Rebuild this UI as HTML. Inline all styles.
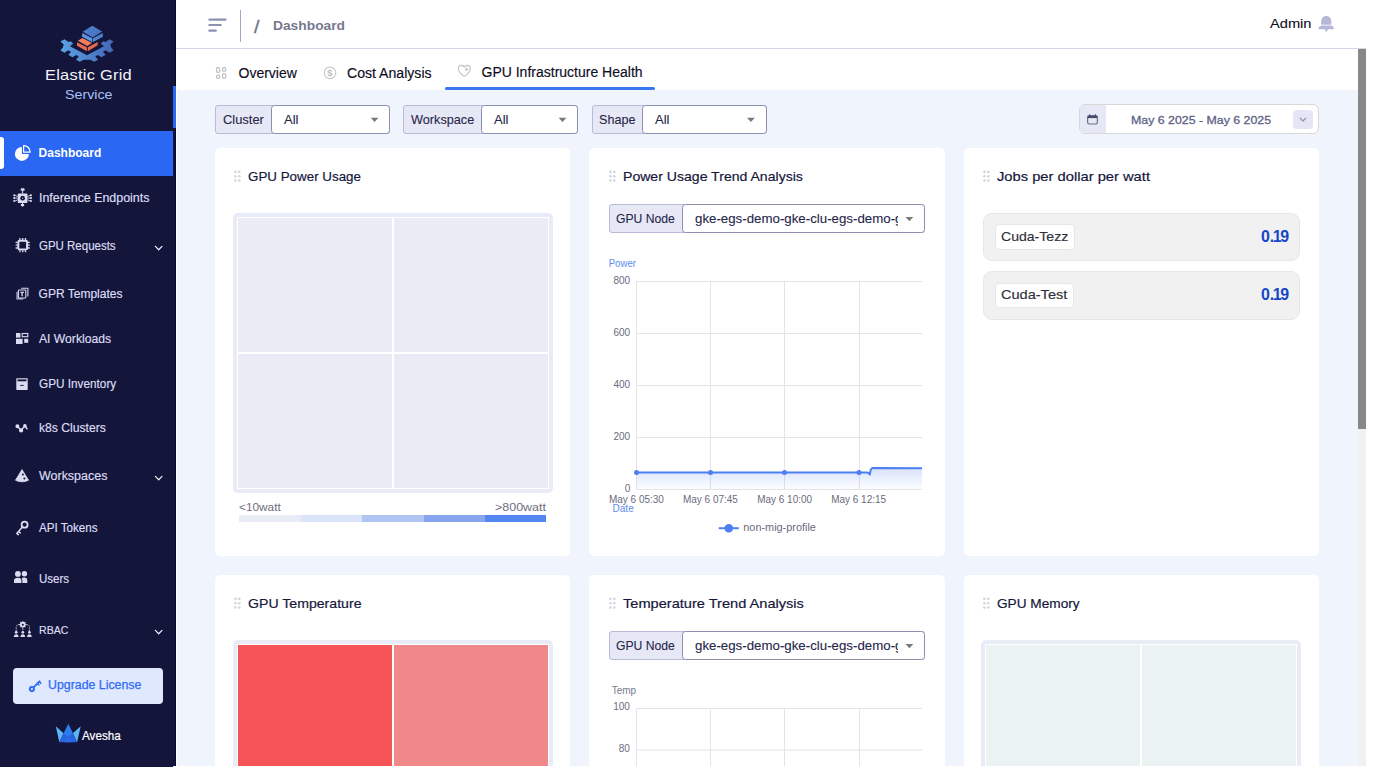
<!DOCTYPE html>
<html lang="en">
<head>
<meta charset="utf-8">
<title>Elastic Grid Service - Dashboard</title>
<style>
html,body{margin:0;padding:0;}
body{width:1375px;height:767px;overflow:hidden;background:#fff;position:relative;font-family:"Liberation Sans",sans-serif;}
.abs,.t,svg.i{position:absolute;}
.t{white-space:nowrap;display:block;}
.s{transform-origin:0 50%;}
span.s:not(.t){display:inline-block;}
#sidebar{left:0;top:0;width:176px;height:767px;background:#13153b;}
#strk{left:174.6px;top:0;width:1.4px;height:766px;background:#07082a;}
#sthumb{left:173px;top:86px;width:3px;height:42px;background:#2b68f1;}
#botline{left:173px;top:766px;width:1202px;height:1px;background:#fff;}
#active{left:0;top:131px;width:173px;height:45px;background:#2a67f2;}
#activeind{left:0;top:137px;width:4px;height:32px;background:#fff;border-radius:0 3px 3px 0;}
#upgrade{left:13px;top:668px;width:150px;height:36px;background:#dfe8fd;border-radius:4px;}
#header{left:176px;top:0;width:1190px;height:48px;background:#fff;border-bottom:1px solid #d3d5e2;}
#hdiv{left:240px;top:10px;width:1px;height:32px;background:#a3a3c6;}
#tabs{left:176px;top:49px;width:1182px;height:41px;background:#fff;}
#tabline{left:445px;top:87px;width:210px;height:3px;background:#3a76f0;border-radius:2px;}
#main{left:177px;top:90px;width:1181px;height:676px;background:#eff4fd;}
#strack{left:1358px;top:49px;width:8px;height:717px;background:#f1f1f1;}
#sbthumb{left:1358px;top:49px;width:8px;height:380px;background:#888;}
.card{background:#fff;border-radius:5px;width:355px;}
.fgroup{height:27px;border:1px solid #b9b9d8;border-radius:3px;background:#e6e8f5;}
.fsel{height:27px;border:1px solid #8d8db0;border-radius:3.5px;background:#fff;}
.tm{background:#e9ecf6;border-radius:5px;}
.cell{background:#e9ecf5;}
.row{background:#f1f1f2;border:1px solid #e4e6ed;border-radius:9px;box-sizing:border-box;}
.chip{background:#fff;border:1px solid #e4e6ec;border-radius:4px;box-sizing:border-box;}
svg text{font-family:"Liberation Sans",sans-serif;}
</style>
</head>
<body>
<!-- ============ SIDEBAR ============ -->
<div id="sidebar" class="abs"></div>
<div id="strk" class="abs"></div>
<div id="sthumb" class="abs"></div>
<div id="active" class="abs"></div>
<div id="activeind" class="abs"></div>
<div id="upgrade" class="abs"></div>
<svg class="i" style="left:0;top:0" width="176" height="767" viewBox="0 0 176 767">
<defs>
  <linearGradient id="gGear" x1="0" y1="0" x2="1" y2="0"><stop offset="0" stop-color="#5aa2e4"/><stop offset="1" stop-color="#4466b6"/></linearGradient>
  <linearGradient id="gTop" x1="0" y1="0" x2="1" y2="1"><stop offset="0" stop-color="#4c84cf"/><stop offset="1" stop-color="#4a6ebc"/></linearGradient>
</defs>
<!-- Elastic Grid logo -->
<g>
  <!-- gear base -->
  <path d="M87.01,55.20 L70.00,46.25 L73.27,43.42 L70.65,41.24 L68.47,41.89 L64.54,39.27 L60.40,41.45 L63.67,44.51 L63.02,47.13 L60.40,50.40 L64.54,52.80 L68.25,50.18 L71.09,51.92 L68.25,54.76 L72.40,57.16 L76.32,54.98 L78.72,56.51 L75.89,59.78 L79.82,61.74 L83.74,59.78 L87.01,59.78 L90.29,59.78 L94.21,61.74 L98.14,59.78 L95.30,56.51 L97.70,54.98 L101.63,57.16 L105.77,54.76 L102.94,51.92 L105.77,50.18 L109.48,52.80 L113.63,50.40 L111.01,47.13 L110.36,44.51 L113.63,41.45 L109.48,39.27 L105.56,41.89 L103.38,41.24 L100.76,43.42 L104.03,46.25 Z" fill="url(#gGear)"/>
  <!-- orange box -->
  <path d="M77.9,40.7 L82.4,38 L92,43.1 L87.2,46.1 Z" fill="#f57d5d"/>
  <path d="M77,42.2 L86.9,47.3 L86.9,51.2 L77,45.8 Z" fill="#ea6b4d"/>
  <path d="M87.8,47.3 L97.7,41.9 L97.7,45.2 L87.8,51.2 Z" fill="#e8694b"/>
  <!-- blue box -->
  <path d="M82.7,31.7 L92.3,25.8 L102.2,31.4 L92.6,37.4 Z" fill="url(#gTop)"/>
  <path d="M82.1,32.9 L92.3,38.3 L92.3,42.2 L82.1,36.8 Z" fill="#5a95de"/>
  <path d="M92.9,38.3 L102.8,32.9 L102.8,36.8 L92.9,42.2 Z" fill="#4f80cc"/>
</g>
<!-- Dashboard (active) -->
<g fill="#fff">
  <path d="M21.9,146.9 A7 7 0 1 0 28.9,153.9 L21.9,153.9 Z"/>
  <path d="M23.6,145.6 A6.6 6.6 0 0 1 30.2,152.2 L23.6,152.2 Z" fill="none" stroke="#fff" stroke-width="1.2" stroke-linejoin="round"/>
</g>
<!-- Inference endpoints -->
<g fill="#dcdcf0" stroke="none">
  <rect x="17.8" y="193.4" width="9.6" height="9.6" rx="0.8"/>
  <circle cx="22.6" cy="198.2" r="2.35" fill="#13153b"/>
  <circle cx="22.6" cy="198.3" r="0.7" fill="#9a9bc0"/>
  <rect x="20.7" y="188.3" width="3.9" height="2.5" rx="0.9"/><rect x="22.1" y="190.6" width="1" height="2.8"/>
  <ellipse cx="22.5" cy="205" rx="1.8" ry="1.2"/><path d="M21.6,205.6 L23.4,205.6 L22.5,207 Z"/><rect x="22" y="203" width="1" height="1.2"/>
  <circle cx="14.3" cy="195.3" r="1.1"/><circle cx="14.3" cy="198.1" r="1.1"/><circle cx="14.3" cy="201" r="1.1"/>
  <circle cx="30.9" cy="195.3" r="1.1"/><circle cx="30.9" cy="198.1" r="1.1"/><circle cx="30.9" cy="201" r="1.1"/>
  <g stroke="#dcdcf0" stroke-width="0.9"><path d="M15.2,195.4 L17.8,196.6 M15.2,198.1 H17.8 M15.2,200.9 L17.8,199.8 M30,195.4 L27.4,196.6 M30,198.1 H27.4 M30,200.9 L27.4,199.8"/></g>
</g>
<!-- GPU Requests chip -->
<g stroke="#dcdcf0" fill="none">
  <rect x="18.3" y="240.8" width="8.8" height="8.8" rx="1.4" stroke-width="2"/>
  <g stroke-width="1.3">
    <path d="M19.9,238.1V240 M22.7,238.1V240 M25.5,238.1V240 M19.9,250.4V252.3 M22.7,250.4V252.3 M25.5,250.4V252.3"/>
    <path d="M15.6,242.4H17.5 M15.6,245.2H17.5 M15.6,248H17.5 M27.9,242.4H29.8 M27.9,245.2H29.8 M27.9,248H29.8"/>
  </g>
</g>
<!-- GPR Templates -->
<g stroke="#dcdcf0" fill="none" stroke-width="1.1">
  <rect x="16.2" y="291.8" width="7" height="8" rx="0.6" fill="#8687ad" stroke="none"/>
  <rect x="18.4" y="290" width="7.4" height="8" rx="0.8" fill="#13153b"/>
  <path d="M21.2,288.2H27.9V296.4"/>
  <path d="M20.4,292.4H23.8 M22.1,292.4V296.2" stroke-width="1.3"/>
</g>
<!-- AI Workloads -->
<g fill="#dcdcf0">
  <rect x="16" y="333" width="4.4" height="4.6"/>
  <rect x="22.2" y="333.5" width="5.6" height="3.2" fill="none" stroke="#dcdcf0" stroke-width="1.1"/>
  <rect x="16" y="338.8" width="6.6" height="5.2"/>
  <rect x="24.2" y="338.8" width="4" height="4"/>
</g>
<!-- GPU Inventory -->
<g fill="#dcdcf0">
  <rect x="16.3" y="378.2" width="11.4" height="11.9" rx="0.5"/>
  <rect x="17.5" y="379.4" width="9" height="1.9" fill="#13153b"/>
  <rect x="20.2" y="384.9" width="3.6" height="0.9" fill="#13153b"/>
</g>
<!-- k8s Clusters -->
<g stroke="#dcdcf0" fill="#dcdcf0" stroke-width="1.4">
  <path d="M17.4,426.2 L21.1,430.4 L24.8,425.9 L27.4,429.3" fill="none"/>
  <circle cx="17.4" cy="426.2" r="1.3"/><circle cx="21.1" cy="430.4" r="1.4"/><circle cx="24.9" cy="425.9" r="1.1"/>
</g>
<!-- Workspaces -->
<g>
  <path d="M22,469.6 L28.5,480.2 Q22,483.4 15.5,480.2 Z" fill="#dcdcf0" stroke="#dcdcf0" stroke-width="0.8" stroke-linejoin="round"/>
  <circle cx="22.9" cy="474.6" r="1" fill="#13153b"/><circle cx="24.4" cy="478.6" r="1" fill="#13153b"/>
</g>
<!-- API Tokens key -->
<g stroke="#dcdcf0" fill="none" stroke-width="1.5" stroke-linecap="round">
  <circle cx="24.6" cy="524.7" r="3" stroke-width="1.8"/>
  <path d="M22.6,526.8 L17,533.2 M18.6,531.4 L20.3,533 M16.8,533.4 L18.3,534.6"/>
</g>
<!-- Users -->
<g fill="#dcdcf0">
  <circle cx="17.9" cy="573.9" r="2.9"/><circle cx="24.4" cy="573.8" r="2.7"/>
  <path d="M14,583 V580.6 Q14,577.8 18,577.8 Q21.4,577.8 21.4,580.6 V583 Z"/>
  <path d="M22.4,583 V580.4 Q22.2,578.6 21.6,577.9 Q23,577.5 24.4,577.6 Q27.3,577.8 27.3,580.6 V583 Z"/>
</g>
<!-- RBAC -->
<g fill="#dcdcf0" stroke="#dcdcf0">
  <circle cx="22.8" cy="624.6" r="2.9" stroke="none"/><circle cx="22.8" cy="624.7" r="1.05" fill="#13153b" stroke="none"/>
  <path d="M22.8,620.9V621.8 M22.8,627.4V628.3 M19.1,624.6H20 M25.6,624.6H26.5 M20.2,622 L20.8,622.6 M25.4,622 L24.8,622.6 M20.2,627.2 L20.8,626.6 M25.4,627.2 L24.8,626.6" stroke-width="1.1"/>
  <path d="M16.2,631 V627.4 Q16.2,624.6 19,624.6 M29.4,631 V627.4 Q29.4,624.6 26.6,624.6 M22.8,628.4V631" fill="none" stroke-width="0.9" stroke-dasharray="1.4 0.9"/>
  <g stroke="none">
    <circle cx="16.2" cy="632.3" r="1.4"/><path d="M13.9,637 Q13.9,634.2 16.2,634.2 Q18.5,634.2 18.5,637 Z"/>
    <circle cx="22.8" cy="632.3" r="1.4"/><path d="M20.5,637 Q20.5,634.2 22.8,634.2 Q25.1,634.2 25.1,637 Z"/>
    <circle cx="29.4" cy="632.3" r="1.4"/><path d="M27.1,637 Q27.1,634.2 29.4,634.2 Q31.7,634.2 31.7,637 Z"/>
  </g>
</g>
<!-- chevrons -->
<g stroke="#ececf8" fill="none" stroke-width="1.3" stroke-linecap="round" stroke-linejoin="round">
  <path d="M155.4,246.4 L158.7,249.7 L162,246.4"/>
  <path d="M155.4,476.4 L158.7,479.7 L162,476.4"/>
  <path d="M155.4,630.4 L158.7,633.7 L162,630.4"/>
</g>
<!-- Upgrade key -->
<g stroke="#2f6bf5" fill="none" stroke-linecap="round">
  <circle cx="31.9" cy="689.1" r="2.1" stroke-width="1.9"/>
  <path d="M33.6,687.4 L39.5,681.4" stroke-width="1.8"/>
  <path d="M37.5,683.4 L38.9,684.9 M39.3,681.6 L40.8,683.2" stroke-width="1.5"/>
</g>
<!-- Avesha crown -->
<g>
  <path d="M55.80,726.29 L63.54,733.20 L59.40,742.32 Z" fill="#5bb7f7"/>
  <path d="M80.68,726.29 L77.09,742.32 L72.94,733.20 Z" fill="#5bb7f7"/>
  <path d="M63.54,733.20 L72.94,733.20 L77.09,742.32 L59.40,742.32 Z" fill="#2a63dc"/>
  <path d="M68.35,723.80 L72.94,733.20 L68.24,737.07 L63.54,733.20 Z" fill="#2c7dee"/>
  <path d="M64.37,742.32 L68.24,737.35 L72.11,742.32 Z" fill="#2a6df0"/>
</g>
</svg>


<!-- ============ HEADER ============ -->
<div id="header" class="abs"></div>
<div id="hdiv" class="abs"></div>
<div id="tabs" class="abs"></div>
<div id="tabline" class="abs"></div>


<!-- ============ MAIN ============ -->
<div id="main" class="abs"></div>
<div id="strack" class="abs"></div>
<div id="sbthumb" class="abs"></div>

<!-- filters -->
<div class="abs fgroup" style="left:215px;top:105px;width:173px;"></div>
<div class="abs fsel" style="left:271px;top:105px;width:117px;"></div>
<div class="abs fgroup" style="left:403px;top:105px;width:173px;"></div>
<div class="abs fsel" style="left:481px;top:105px;width:95px;"></div>
<div class="abs fgroup" style="left:592px;top:105px;width:173px;"></div>
<div class="abs fsel" style="left:642px;top:105px;width:123px;"></div>
<!-- date picker -->
<div class="abs" style="left:1079px;top:104px;width:238px;height:28px;border:1px solid #d8d8d8;border-radius:6px;background:#fff;overflow:hidden;">
  <div class="abs" style="left:0;top:0;width:26px;height:28px;background:#e6e8f5;"></div>
</div>
<div class="abs" style="left:1293px;top:110px;width:20px;height:19px;background:#e4e6f5;border-radius:4px;"></div>

<!-- cards -->
<div class="abs card" style="left:215px;top:148px;height:408px;"></div>
<div class="abs card" style="left:589px;top:148px;height:408px;width:356px;"></div>
<div class="abs card" style="left:964px;top:148px;height:408px;width:354.8px;"></div>
<div class="abs card" style="left:215px;top:575px;height:260px;"></div>
<div class="abs card" style="left:589px;top:575px;height:260px;width:356px;"></div>
<div class="abs card" style="left:964px;top:575px;height:260px;width:354.8px;"></div>

<!-- card 3 rows -->
<div class="abs row" style="left:983px;top:212.8px;width:317px;height:47.8px;"></div>
<div class="abs chip" style="left:994.6px;top:223.5px;width:80.6px;height:26.9px;"></div>
<div class="abs row" style="left:983px;top:271.2px;width:317px;height:48.5px;"></div>
<div class="abs chip" style="left:994.6px;top:282.5px;width:79.8px;height:25.8px;"></div>
<!-- GPU Node selects -->
<div class="abs fgroup" style="left:609px;top:204px;width:314px;"></div>
<div class="abs fsel" style="left:682px;top:204px;width:241px;"></div>
<div class="abs fgroup" style="left:609px;top:631px;width:314px;"></div>
<div class="abs fsel" style="left:682px;top:631px;width:241px;"></div>
<svg class="i" style="left:0;top:0" width="1375" height="767" viewBox="0 0 1375 767">
<defs>
  <linearGradient id="gArea" x1="0" y1="0" x2="0" y2="1"><stop offset="0" stop-color="#4d7ff0" stop-opacity="0.22"/><stop offset="1" stop-color="#4d7ff0" stop-opacity="0.02"/></linearGradient>
</defs>
<!-- hamburger -->
<g stroke="#8f90b5" stroke-width="2.2" stroke-linecap="round">
  <path d="M209.4,19.6H225.6 M209.4,25H220.8 M209.4,30.7H215.8"/>
</g>
<!-- bell -->
<g fill="#b5b6d8">
  <path d="M1321.2,24.8 V21 A5.05,5.1 0 0 1 1331.3,21 V24.8 Z"/>
  <rect x="1321.2" y="24.8" width="10.1" height="1.2" fill="#dcdced"/>
  <path d="M1319.6,25.9 H1332.9 L1334,29.3 H1318.3 Z"/>
  <path d="M1324.3,29.3 H1328.3 L1326.3,32 Z"/>
</g>
<!-- tab icons -->
<g fill="none" stroke="#bdbfc6" stroke-width="1.2">
  <rect x="216.5" y="67.7" width="3.1" height="4.6" rx="1"/><rect x="222.5" y="67.7" width="3.2" height="3.4" rx="1"/>
  <rect x="216.5" y="75" width="3.1" height="3.2" rx="1"/><rect x="222.5" y="73.7" width="3.2" height="4.5" rx="1"/>
</g>
<circle cx="330" cy="72.8" r="5.8" fill="none" stroke="#c6c6ca" stroke-width="1.1"/>
<text x="330" y="76.1" font-size="9.5" font-weight="700" fill="#bdbec3" text-anchor="middle">$</text>
<g fill="none" stroke="#c2c3c8" stroke-width="1.1" stroke-linejoin="round">
  <path d="M464.3,76.4 C461.2,74.2 458.4,71.8 458.4,68.7 C458.4,66.6 459.9,65.4 461.5,65.4 C462.8,65.4 463.8,66.2 464.3,67.3 C464.8,66.2 465.8,65.4 467.2,65.4 C468.8,65.4 470.3,66.6 470.3,68.7 C470.3,71.8 467.4,74.2 464.3,76.4 Z"/>
  <path d="M466.6,67.8V71 M465,69.4H468.2" stroke="#c0c1c6" stroke-width="1.1"/>
</g>
<!-- select arrows -->
<g fill="#77777c">
  <path d="M370.8,117.8H378.4L374.6,122Z"/><path d="M558.6,117.8H566.4L562.5,122Z"/><path d="M747,117.8H754.8L750.9,122Z"/>
  <path d="M905.5,217H913.3L909.4,221.3Z"/><path d="M905.5,644H913.3L909.4,648.3Z"/>
</g>
<!-- calendar -->
<g fill="none" stroke="#6d7090" stroke-width="1.2">
  <rect x="1087.6" y="115.6" width="9.8" height="8.4" rx="1.7"/>
  <path d="M1087.8,117H1097.2" stroke="#474a66" stroke-width="2.2"/>
  <path d="M1089.7,114.2V115.6 M1095.3,114.2V115.6" stroke="#474a66" stroke-width="1.2"/>
</g>
<path d="M1300.2,118.2 L1303,121 L1305.8,118.2" fill="none" stroke="#8c8da8" stroke-width="1.1" stroke-linecap="round" stroke-linejoin="round"/>
<!-- drag handles -->
<g fill="#d3d5df">
  <circle cx="235.4" cy="171.9" r="1.3"/><circle cx="239.3" cy="171.9" r="1.3"/><circle cx="235.4" cy="176.2" r="1.3"/><circle cx="239.3" cy="176.2" r="1.3"/><circle cx="235.4" cy="180.5" r="1.3"/><circle cx="239.3" cy="180.5" r="1.3"/>
  <circle cx="610.4" cy="171.9" r="1.3"/><circle cx="614.3" cy="171.9" r="1.3"/><circle cx="610.4" cy="176.2" r="1.3"/><circle cx="614.3" cy="176.2" r="1.3"/><circle cx="610.4" cy="180.5" r="1.3"/><circle cx="614.3" cy="180.5" r="1.3"/>
  <circle cx="984.4" cy="171.9" r="1.3"/><circle cx="988.3" cy="171.9" r="1.3"/><circle cx="984.4" cy="176.2" r="1.3"/><circle cx="988.3" cy="176.2" r="1.3"/><circle cx="984.4" cy="180.5" r="1.3"/><circle cx="988.3" cy="180.5" r="1.3"/>
  <circle cx="235.4" cy="598.9" r="1.3"/><circle cx="239.3" cy="598.9" r="1.3"/><circle cx="235.4" cy="603.2" r="1.3"/><circle cx="239.3" cy="603.2" r="1.3"/><circle cx="235.4" cy="607.5" r="1.3"/><circle cx="239.3" cy="607.5" r="1.3"/>
  <circle cx="610.4" cy="598.9" r="1.3"/><circle cx="614.3" cy="598.9" r="1.3"/><circle cx="610.4" cy="603.2" r="1.3"/><circle cx="614.3" cy="603.2" r="1.3"/><circle cx="610.4" cy="607.5" r="1.3"/><circle cx="614.3" cy="607.5" r="1.3"/>
  <circle cx="984.4" cy="598.9" r="1.3"/><circle cx="988.3" cy="598.9" r="1.3"/><circle cx="984.4" cy="603.2" r="1.3"/><circle cx="988.3" cy="603.2" r="1.3"/><circle cx="984.4" cy="607.5" r="1.3"/><circle cx="988.3" cy="607.5" r="1.3"/>
</g>

<!-- ===== card 1 treemap ===== -->
<rect x="233" y="213" width="320" height="280" rx="5" fill="#e9ecf6"/>
<rect x="237" y="217" width="312" height="272" fill="#fff"/>
<g fill="#e9ecf5">
  <rect x="238" y="218" width="154" height="134"/><rect x="394" y="218" width="154" height="134"/>
  <rect x="238" y="354" width="154" height="134"/><rect x="394" y="354" width="154" height="134"/>
</g>
<!-- legend bar -->
<rect x="239" y="515" width="61.6" height="7" fill="#e9ecf5"/>
<rect x="300.5" y="515" width="61.6" height="7" fill="#dbe4fa"/>
<rect x="362" y="515" width="61.6" height="7" fill="#b1c5f2"/>
<rect x="423.5" y="515" width="61.6" height="7" fill="#86a5ee"/>
<rect x="485" y="515" width="61" height="7" fill="#5585f0"/>

<!-- ===== card 2 chart ===== -->
<g stroke="#e4e4e7" stroke-width="1" fill="none">
  <path d="M636.5,281.5H922 M636.5,333.5H922 M636.5,385.5H922 M636.5,437.5H922 M636.5,489.5H922"/>
  <path d="M636.5,281.5V489.5 M710.5,281.5V489.5 M784.5,281.5V489.5 M859.5,281.5V489.5"/>
</g>
<path d="M636.5,472.4 L866.6,472.4 L868.6,473 L869.8,474.6 L870.8,469.4 L872.4,468 L922,468.3 L922,489 L636.5,489 Z" fill="url(#gArea)"/>
<path d="M636.5,472.4 L866.6,472.4 L868.6,473 L869.8,474.6 L870.8,469.4 L872.4,468 L922,468.3" fill="none" stroke="#4d7ff0" stroke-width="2" stroke-linejoin="round"/>
<g fill="#4d7ff0"><circle cx="636.5" cy="472.4" r="2.5"/><circle cx="710.5" cy="472.4" r="2.5"/><circle cx="784.5" cy="472.4" r="2.5"/><circle cx="859" cy="472.4" r="2.5"/></g>
<g font-size="10" fill="#6b6b7d">
  <text x="630.2" y="283.7" text-anchor="end">800</text>
  <text x="630.2" y="335.8" text-anchor="end">600</text>
  <text x="630.2" y="387.8" text-anchor="end">400</text>
  <text x="630.2" y="439.8" text-anchor="end">200</text>
  <text x="630.2" y="491.8" text-anchor="end">0</text>
  <text x="609" y="502.7" textLength="54.9" lengthAdjust="spacingAndGlyphs">May 6 05:30</text>
  <text x="683" y="502.7" textLength="54.9" lengthAdjust="spacingAndGlyphs">May 6 07:45</text>
  <text x="757.2" y="502.7" textLength="54.9" lengthAdjust="spacingAndGlyphs">May 6 10:00</text>
  <text x="831.2" y="502.7" textLength="54.9" lengthAdjust="spacingAndGlyphs">May 6 12:15</text>
  <text x="743.3" y="531.4" textLength="72.6" lengthAdjust="spacingAndGlyphs">non-mig-profile</text>
</g>
<g font-size="10" fill="#5b8def">
  <text x="608.7" y="267.2" textLength="27.3" lengthAdjust="spacingAndGlyphs">Power</text>
  <text x="612.6" y="512.2" textLength="21.1" lengthAdjust="spacingAndGlyphs">Date</text>
</g>
<path d="M718.7,528.2H738.8" stroke="#4d7ff0" stroke-width="2"/><circle cx="728.8" cy="528.2" r="4.3" fill="#4d7ff0"/>

<!-- ===== card 4 treemap (temperature) ===== -->
<rect x="233" y="640" width="320" height="280" rx="5" fill="#e9ecf6"/>
<rect x="237" y="644" width="312" height="272" fill="#fff"/>
<rect x="238" y="645" width="154" height="134" fill="#f55356"/>
<rect x="394" y="645" width="154" height="134" fill="#f0888a"/>

<!-- ===== card 5 chart ===== -->
<g stroke="#e4e4e7" stroke-width="1" fill="none">
  <path d="M636.5,708.5H922 M636.5,750H922"/>
  <path d="M636.5,708.5V767 M710.5,708.5V767 M784.5,708.5V767 M859.5,708.5V767"/>
</g>
<g font-size="10" fill="#6b6b7d">
  <text x="629.9" y="710.4" text-anchor="end">100</text>
  <text x="629.9" y="751.8" text-anchor="end">80</text>
</g>
<text x="611.7" y="693.9" font-size="10" fill="#77778f" textLength="24.5" lengthAdjust="spacingAndGlyphs">Temp</text>

<!-- ===== card 6 treemap (memory) ===== -->
<rect x="981" y="640" width="320" height="280" rx="5" fill="#e9ecf6"/>
<rect x="985" y="644" width="312" height="272" fill="#fff"/>
<rect x="986" y="645" width="154" height="134" fill="#eaf3f2"/>
<rect x="1142" y="645" width="154" height="134" fill="#eaf3f2"/>
</svg>


<nav aria-label="Sidebar" style="display:contents">
<span class="t s" id="t0" style="left:44.50px;top:65.11px;font-size:14.4px;line-height:20px;font-weight:400;color:#f4f4f8;letter-spacing:0.225px;transform:scaleX(1.1400);">Elastic Grid</span>
<span class="t s" id="t1" style="left:64.50px;top:84.86px;font-size:13.4px;line-height:19px;font-weight:400;color:#a9c1f5;transform:scaleX(1.0637);">Service</span>
<span class="t s" id="t2" style="left:38.60px;top:144.64px;font-size:12px;line-height:17px;font-weight:700;color:#ffffff;">Dashboard</span>
<span class="t s" id="t3" style="left:38.60px;top:189.84px;font-size:12px;line-height:17px;font-weight:400;color:#dcdcf2;-webkit-text-stroke:0.18px #dcdcf2;transform:scaleX(1.0342);">Inference Endpoints</span>
<span class="t s" id="t4" style="left:38.60px;top:237.74px;font-size:12px;line-height:17px;font-weight:400;color:#dcdcf2;-webkit-text-stroke:0.18px #dcdcf2;transform:scaleX(0.9569);">GPU Requests</span>
<span class="t s" id="t5" style="left:38.60px;top:285.74px;font-size:12px;line-height:17px;font-weight:400;color:#dcdcf2;-webkit-text-stroke:0.18px #dcdcf2;">GPR Templates</span>
<span class="t s" id="t6" style="left:38.60px;top:330.74px;font-size:12px;line-height:17px;font-weight:400;color:#dcdcf2;-webkit-text-stroke:0.18px #dcdcf2;transform:scaleX(1.0121);">AI Workloads</span>
<span class="t s" id="t7" style="left:38.60px;top:375.64px;font-size:12px;line-height:17px;font-weight:400;color:#dcdcf2;-webkit-text-stroke:0.18px #dcdcf2;transform:scaleX(0.9809);">GPU Inventory</span>
<span class="t s" id="t8" style="left:38.60px;top:419.74px;font-size:12px;line-height:17px;font-weight:400;color:#dcdcf2;-webkit-text-stroke:0.18px #dcdcf2;transform:scaleX(1.0116);">k8s Clusters</span>
<span class="t s" id="t9" style="left:38.60px;top:467.94px;font-size:12px;line-height:17px;font-weight:400;color:#dcdcf2;-webkit-text-stroke:0.18px #dcdcf2;transform:scaleX(1.0393);">Workspaces</span>
<span class="t s" id="t10" style="left:38.60px;top:519.84px;font-size:12px;line-height:17px;font-weight:400;color:#dcdcf2;-webkit-text-stroke:0.18px #dcdcf2;transform:scaleX(0.9672);">API Tokens</span>
<span class="t s" id="t11" style="left:38.60px;top:570.74px;font-size:12px;line-height:17px;font-weight:400;color:#dcdcf2;-webkit-text-stroke:0.18px #dcdcf2;transform:scaleX(0.9603);">Users</span>
<span class="t s" id="t12" style="left:38.80px;top:622.28px;font-size:11.6px;line-height:16px;font-weight:400;color:#dcdcf2;-webkit-text-stroke:0.18px #dcdcf2;transform:scaleX(0.9125);">RBAC</span>
<span class="t s" id="t13" style="left:48.40px;top:676.27px;font-size:12.5px;line-height:18px;font-weight:400;color:#2f6bf5;-webkit-text-stroke:0.25px #2f6bf5;transform:scaleX(0.9882);">Upgrade License</span>
<span class="t s" id="t14" style="left:81.50px;top:725.89px;font-size:13.6px;line-height:19px;font-weight:400;color:#ffffff;-webkit-text-stroke:0.2px #ffffff;letter-spacing:-0.022px;transform:scaleX(0.8600);">Avesha</span>
</nav>
<header  style="display:contents">
<span class="t s" id="t15" style="left:253.80px;top:12.82px;font-size:19px;line-height:27px;font-weight:400;color:#74748e;-webkit-text-stroke:0.35px #74748e;transform:scaleX(1.0414);">/</span>
<span class="t s" id="t16" style="left:272.60px;top:16.22px;font-size:13.5px;line-height:19px;font-weight:700;color:#77778f;transform:scaleX(1.0211);">Dashboard</span>
<span class="t s" id="t17" style="left:1269.70px;top:13.72px;font-size:13.5px;line-height:19px;font-weight:400;color:#0e0e1a;-webkit-text-stroke:0.1px #0e0e1a;transform:scaleX(1.0845);">Admin</span>
</header>
<nav aria-label="Dashboard tabs" style="display:contents">
<span class="t s" id="t18" style="left:238.50px;top:62.85px;font-size:14px;line-height:20px;font-weight:400;color:#0d0d1e;-webkit-text-stroke:0.15px #0d0d1e;">Overview</span>
<span class="t s" id="t19" style="left:346.90px;top:62.85px;font-size:14px;line-height:20px;font-weight:400;color:#0d0d1e;-webkit-text-stroke:0.15px #0d0d1e;transform:scaleX(1.0066);">Cost Analysis</span>
<span class="t s" id="t20" style="left:481.50px;top:62.35px;font-size:14px;line-height:20px;font-weight:400;color:#0d0d1e;-webkit-text-stroke:0.15px #0d0d1e;">GPU Infrastructure Health</span>
</nav>
<form aria-label="Filters" style="display:contents">
<span class="t s" id="t21" style="left:222.70px;top:110.60px;font-size:13px;line-height:18px;font-weight:400;color:#26264a;-webkit-text-stroke:0.1px #26264a;transform:scaleX(0.9930);">Cluster</span>
<span class="t s" id="t22" style="left:284.30px;top:110.60px;font-size:13px;line-height:18px;font-weight:400;color:#26264a;-webkit-text-stroke:0.1px #26264a;transform:scaleX(1.0032);">All</span>
<span class="t s" id="t23" style="left:411.00px;top:110.60px;font-size:13px;line-height:18px;font-weight:400;color:#26264a;-webkit-text-stroke:0.1px #26264a;transform:scaleX(0.9769);">Workspace</span>
<span class="t s" id="t24" style="left:493.90px;top:110.60px;font-size:13px;line-height:18px;font-weight:400;color:#26264a;-webkit-text-stroke:0.1px #26264a;transform:scaleX(1.0032);">All</span>
<span class="t s" id="t25" style="left:599.20px;top:110.60px;font-size:13px;line-height:18px;font-weight:400;color:#26264a;-webkit-text-stroke:0.1px #26264a;transform:scaleX(0.9682);">Shape</span>
<span class="t s" id="t26" style="left:655.30px;top:110.60px;font-size:13px;line-height:18px;font-weight:400;color:#26264a;-webkit-text-stroke:0.1px #26264a;transform:scaleX(1.0032);">All</span>
<span class="t s" id="t27" style="left:1130.70px;top:112.45px;font-size:11.7px;line-height:16px;font-weight:400;color:#5d6285;-webkit-text-stroke:0.3px #5d6285;transform:scaleX(1.0570);">May 6 2025 - May 6 2025</span>
</form>
<main  style="display:contents">
<span class="t s" id="t28" style="left:248.00px;top:166.99px;font-size:13.3px;line-height:19px;font-weight:400;color:#15163a;-webkit-text-stroke:0.18px #15163a;transform:scaleX(1.0058);">GPU Power Usage</span>
<span class="t s" id="t29" style="left:622.80px;top:166.69px;font-size:13.3px;line-height:19px;font-weight:400;color:#15163a;-webkit-text-stroke:0.18px #15163a;transform:scaleX(1.0582);">Power Usage Trend Analysis</span>
<span class="t s" id="t30" style="left:996.80px;top:167.09px;font-size:13.3px;line-height:19px;font-weight:400;color:#15163a;-webkit-text-stroke:0.18px #15163a;transform:scaleX(1.1069);">Jobs per dollar per watt</span>
<span class="t s" id="t31" style="left:248.00px;top:593.99px;font-size:13.3px;line-height:19px;font-weight:400;color:#15163a;-webkit-text-stroke:0.18px #15163a;transform:scaleX(1.0615);">GPU Temperature</span>
<span class="t s" id="t32" style="left:622.80px;top:593.69px;font-size:13.3px;line-height:19px;font-weight:400;color:#15163a;-webkit-text-stroke:0.18px #15163a;transform:scaleX(1.0975);">Temperature Trend Analysis</span>
<span class="t s" id="t33" style="left:996.60px;top:594.09px;font-size:13.3px;line-height:19px;font-weight:400;color:#15163a;-webkit-text-stroke:0.18px #15163a;transform:scaleX(1.0257);">GPU Memory</span>
<span class="t s" id="t34" style="left:239.00px;top:499.69px;font-size:11px;line-height:15px;font-weight:400;color:#6e6e80;transform:scaleX(1.0735);">&lt;10watt</span>
<span class="t s" id="t35" style="left:495.00px;top:499.69px;font-size:11px;line-height:15px;font-weight:400;color:#6e6e80;transform:scaleX(1.1345);">&gt;800watt</span>
<span class="t s" id="t36" style="left:616.30px;top:210.20px;font-size:13px;line-height:18px;font-weight:400;color:#26264a;-webkit-text-stroke:0.1px #26264a;transform:scaleX(0.9368);">GPU Node</span>
<span class="t" id="t37" style="left:695.30px;top:210.00px;font-size:13px;line-height:18px;font-weight:400;color:#26264a;-webkit-text-stroke:0.1px #26264a;white-space:nowrap;width:203px;overflow:hidden;"><span class="s" style="transform:scaleX(1.0219);">gke-egs-demo-gke-clu-egs-demo-gpu-pool-1</span></span>
<span class="t s" id="t38" style="left:616.30px;top:637.20px;font-size:13px;line-height:18px;font-weight:400;color:#26264a;-webkit-text-stroke:0.1px #26264a;transform:scaleX(0.9368);">GPU Node</span>
<span class="t" id="t39" style="left:695.30px;top:637.00px;font-size:13px;line-height:18px;font-weight:400;color:#26264a;-webkit-text-stroke:0.1px #26264a;white-space:nowrap;width:203px;overflow:hidden;"><span class="s" style="transform:scaleX(1.0219);">gke-egs-demo-gke-clu-egs-demo-gpu-pool-1</span></span>
<span class="t s" id="t40" style="left:1001.20px;top:228.00px;font-size:13px;line-height:18px;font-weight:400;color:#303038;-webkit-text-stroke:0.15px #303038;transform:scaleX(1.0814);">Cuda-Tezz</span>
<span class="t s" id="t41" style="left:1001.20px;top:286.00px;font-size:13px;line-height:18px;font-weight:400;color:#303038;-webkit-text-stroke:0.15px #303038;transform:scaleX(1.1190);">Cuda-Test</span>
<span class="t s" id="t42" style="left:1261.10px;top:225.86px;font-size:16px;line-height:22px;font-weight:700;color:#1546c8;transform:scaleX(0.9938);">0.<span style="margin:0 -1.2px 0 -1.6px">1</span>9</span>
<span class="t s" id="t43" style="left:1261.10px;top:283.86px;font-size:16px;line-height:22px;font-weight:700;color:#1546c8;transform:scaleX(0.9938);">0.<span style="margin:0 -1.2px 0 -1.6px">1</span>9</span>
</main>
<div id="botline" class="abs"></div>
</body>
</html>
